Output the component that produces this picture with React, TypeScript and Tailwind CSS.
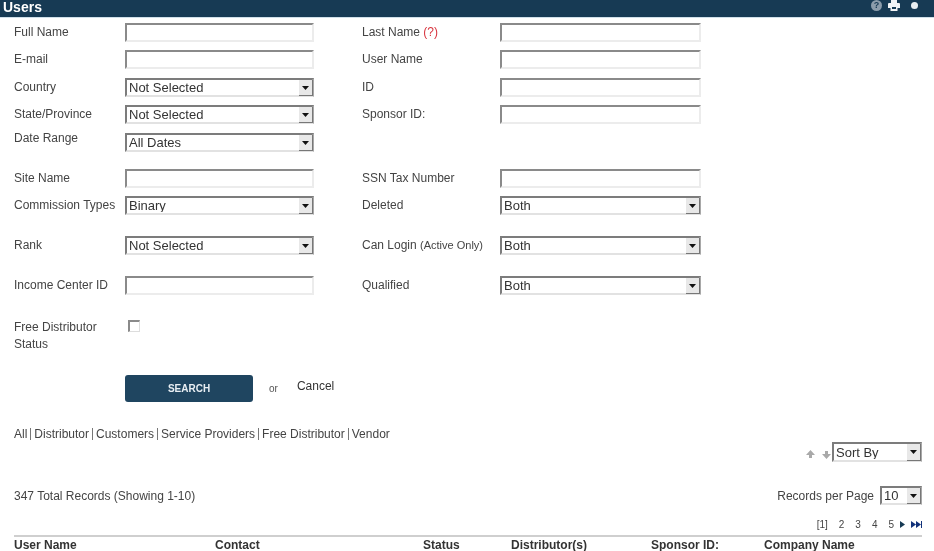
import type { ReactNode } from 'react'

function TextBox() {
  return (
    <input
      type="text"
      className="block h-full w-full border-2 border-t-[#8a8a8a] border-l-[#8a8a8a] border-r-[#ececec] border-b-[#ececec] bg-white"
    />
  )
}

function Combo({ value, className }: { value: string; className: string }) {
  return (
    <div className={`relative ${className}`}>
      <select
        defaultValue={value}
        className="block h-full w-full appearance-none rounded-none border-2 border-t-[#7c7c7c] border-l-[#7c7c7c] border-r-[#a8a8a8] border-b-[#e2e2e2] bg-white pl-[2px] font-['Liberation_Sans',sans-serif] text-[13px] leading-none text-[#333]"
      >
        <option>{value}</option>
      </select>
      <span className="pointer-events-none absolute top-[2px] right-[1px] bottom-[1px] flex w-[14px] items-center justify-center border-r border-b border-[#777] bg-[#e8e8e8]">
        <svg width="7" height="4" viewBox="0 0 7 4">
          <path d="M0 0h7L3.5 4z" fill="#111" />
        </svg>
      </span>
    </div>
  )
}

function Row({ className, children }: { className: string; children: ReactNode }) {
  return <div className={`flex h-[19px] text-[12px] text-[#444] ${className}`}>{children}</div>
}

function Label({ left, up, children }: { left?: boolean; up?: boolean; children: ReactNode }) {
  return (
    <div
      className={`leading-[17px] ${up ? '-mt-[3px]' : 'mt-[1px]'} ${left ? 'w-[111px] shrink-0' : 'ml-[48px] w-[138px] shrink-0'}`}
    >
      {children}
    </div>
  )
}

function Left({ label, up, children }: { label: string; up?: boolean; children: ReactNode }) {
  return (
    <>
      <Label left up={up}>{label}</Label>
      <div className="w-[189px] shrink-0">{children}</div>
    </>
  )
}

function Right({ label, children }: { label: ReactNode; children: ReactNode }) {
  return (
    <>
      <Label>{label}</Label>
      <div className="w-[201px] shrink-0">{children}</div>
    </>
  )
}

function SortArrow({ up }: { up?: boolean }) {
  return (
    <svg width="9" height="9" viewBox="0 0 9 9">
      <path d={up ? 'M4.5 0 9 5H6v3H3V5H0z' : 'M3 1h3v3h3L4.5 9 0 4h3z'} fill="#a9a9a9" />
    </svg>
  )
}

const HEADERS = [
  ['User Name', 'w-[201px]'],
  ['Contact', 'w-[208px]'],
  ['Status', 'w-[88px]'],
  ['Distributor(s)', 'w-[140px]'],
  ['Sponsor ID:', 'w-[113px]'],
  ['Company Name', 'w-[158px]'],
]

const FILTERS = ['All', 'Distributor', 'Customers', 'Service Providers', 'Free Distributor', 'Vendor']

export default function App() {
  return (
    <div className="h-[551px] overflow-hidden bg-white font-['Liberation_Sans',sans-serif] blur-[0.5px]">
      {/* Title bar */}
      <div className="flex h-[18px] items-start justify-between border-b border-[#cfdfe9] bg-[#173a54] pr-[16px] pl-[3px]">
        <span className="text-[14px] leading-[14px] font-bold text-white">Users</span>
        <div className="flex items-center gap-[6px]">
          <span className="flex h-[11px] w-[11px] items-center justify-center rounded-full bg-[#8b9cab] text-[9px] leading-none font-bold text-[#173a54]">
            ?
          </span>
          <svg width="12" height="11" viewBox="0 0 12 11">
            <path d="M3 0h6v3h2a1 1 0 0 1 1 1v4h-2.500v3h-7V8H0V4a1 1 0 0 1 1-1h2z" fill="#f2f4f6" />
            <path d="M4 7h4v2H4z" fill="#173a54" />
          </svg>
          <span className="ml-[5px] h-[7px] w-[7px] rounded-full bg-[#e9eef2]" />
        </div>
      </div>

      {/* Search form */}
      <div className="pl-[14px]">
        <Row className="mt-[5px]">
          <Left label="Full Name"><TextBox /></Left>
          <Right label={<>Last Name <span className="text-[#d8353f]">(?)</span></>}><TextBox /></Right>
        </Row>
        <Row className="mt-[8px]">
          <Left label="E-mail"><TextBox /></Left>
          <Right label="User Name"><TextBox /></Right>
        </Row>
        <Row className="mt-[9px]">
          <Left label="Country"><Combo value="Not Selected" className="h-full" /></Left>
          <Right label="ID"><TextBox /></Right>
        </Row>
        <Row className="mt-[8px]">
          <Left label="State/Province"><Combo value="Not Selected" className="h-full" /></Left>
          <Right label="Sponsor ID:"><TextBox /></Right>
        </Row>
        <Row className="mt-[9px]">
          <Left label="Date Range" up><Combo value="All Dates" className="h-full" /></Left>
        </Row>
        <Row className="mt-[17px]">
          <Left label="Site Name"><TextBox /></Left>
          <Right label="SSN Tax Number"><TextBox /></Right>
        </Row>
        <Row className="mt-[8px]">
          <Left label="Commission Types"><Combo value="Binary" className="h-full" /></Left>
          <Right label="Deleted"><Combo value="Both" className="h-full" /></Right>
        </Row>
        <Row className="mt-[21px]">
          <Left label="Rank"><Combo value="Not Selected" className="h-full" /></Left>
          <Right label={<>Can Login <span className="text-[11px]">(Active Only)</span></>}><Combo value="Both" className="h-full" /></Right>
        </Row>
        <Row className="mt-[21px]">
          <Left label="Income Center ID"><TextBox /></Left>
          <Right label="Qualified"><Combo value="Both" className="h-full" /></Right>
        </Row>

        <div className="mt-[24px] flex text-[12px] leading-[17px] text-[#444]">
          <div className="w-[111px] shrink-0">
            Free Distributor
            <br />
            Status
          </div>
          <input
            type="checkbox"
            className="mt-[1px] ml-[3px] h-[12px] w-[12px] appearance-none border border-t-2 border-l-2 border-t-[#8a8a8a] border-r-[#ddd] border-b-[#ddd] border-l-[#8a8a8a] bg-white"
          />
        </div>

        <div className="mt-[22px] ml-[111px] flex items-center">
          <button className="h-[27px] w-[128px] rounded-[3px] bg-[#1f4560] text-[10px] font-bold text-[#e8eef3]">
            SEARCH
          </button>
          <span className="ml-[16px] text-[10px] text-[#555]">or</span>
          <span className="-mt-[6px] ml-[19px] text-[12px] text-[#333]">Cancel</span>
        </div>

        <div className="mt-[24px] flex h-[15px] items-center text-[12px] leading-none text-[#444]">
          {FILTERS.map((f, i) => (
            <span key={f} className={i > 0 ? 'ml-[3px] border-l border-[#777] pl-[3px]' : ''}>
              {f}
            </span>
          ))}
        </div>
      </div>

      {/* Sort and paging */}
      <div className="pr-[12px] pl-[14px]">
        <div className="mt-[1px] flex h-[20px] items-center justify-end">
          <div className="mt-[4px] mr-[1px] flex items-center gap-[7px]">
            <SortArrow up />
            <SortArrow />
          </div>
          <Combo value="Sort By" className="h-[20px] w-[90px]" />
        </div>
        <div className="mt-[24px] flex h-[19px] items-center justify-between text-[12px] text-[#444]">
          <span>347 Total Records (Showing 1-10)</span>
          <div className="flex items-center">
            <span className="mr-[6px]">Records per Page</span>
            <Combo value="10" className="h-[19px] w-[42px]" />
          </div>
        </div>
        <div className="mt-[13px] flex h-[13px] items-center justify-end text-[10px] leading-none text-[#444]">
          <span>[1]</span>
          <span className="ml-[11px]">2</span>
          <span className="ml-[11px]">3</span>
          <span className="ml-[11px]">4</span>
          <span className="ml-[11px]">5</span>
          <svg className="ml-[6px]" width="5" height="7" viewBox="0 0 5 7">
            <path d="M0 0l5 3.500L0 7z" fill="#173a54" />
          </svg>
          <svg className="ml-[6px]" width="11" height="7" viewBox="0 0 11 7">
            <path d="M0 0l5 3.500L0 7zM5 0l5 3.500L5 7zM10 0h1v7h-1z" fill="#12327a" />
          </svg>
        </div>
        <div className="mt-[4px] flex h-[16px] items-start border-t-2 border-[#cfcfcf] pt-[2px] text-[12px] leading-[13px] font-bold text-[#333]">
          {HEADERS.map(([h, w]) => (
            <span key={h} className={`shrink-0 ${w}`}>
              {h}
            </span>
          ))}
        </div>
      </div>
    </div>
  )
}
